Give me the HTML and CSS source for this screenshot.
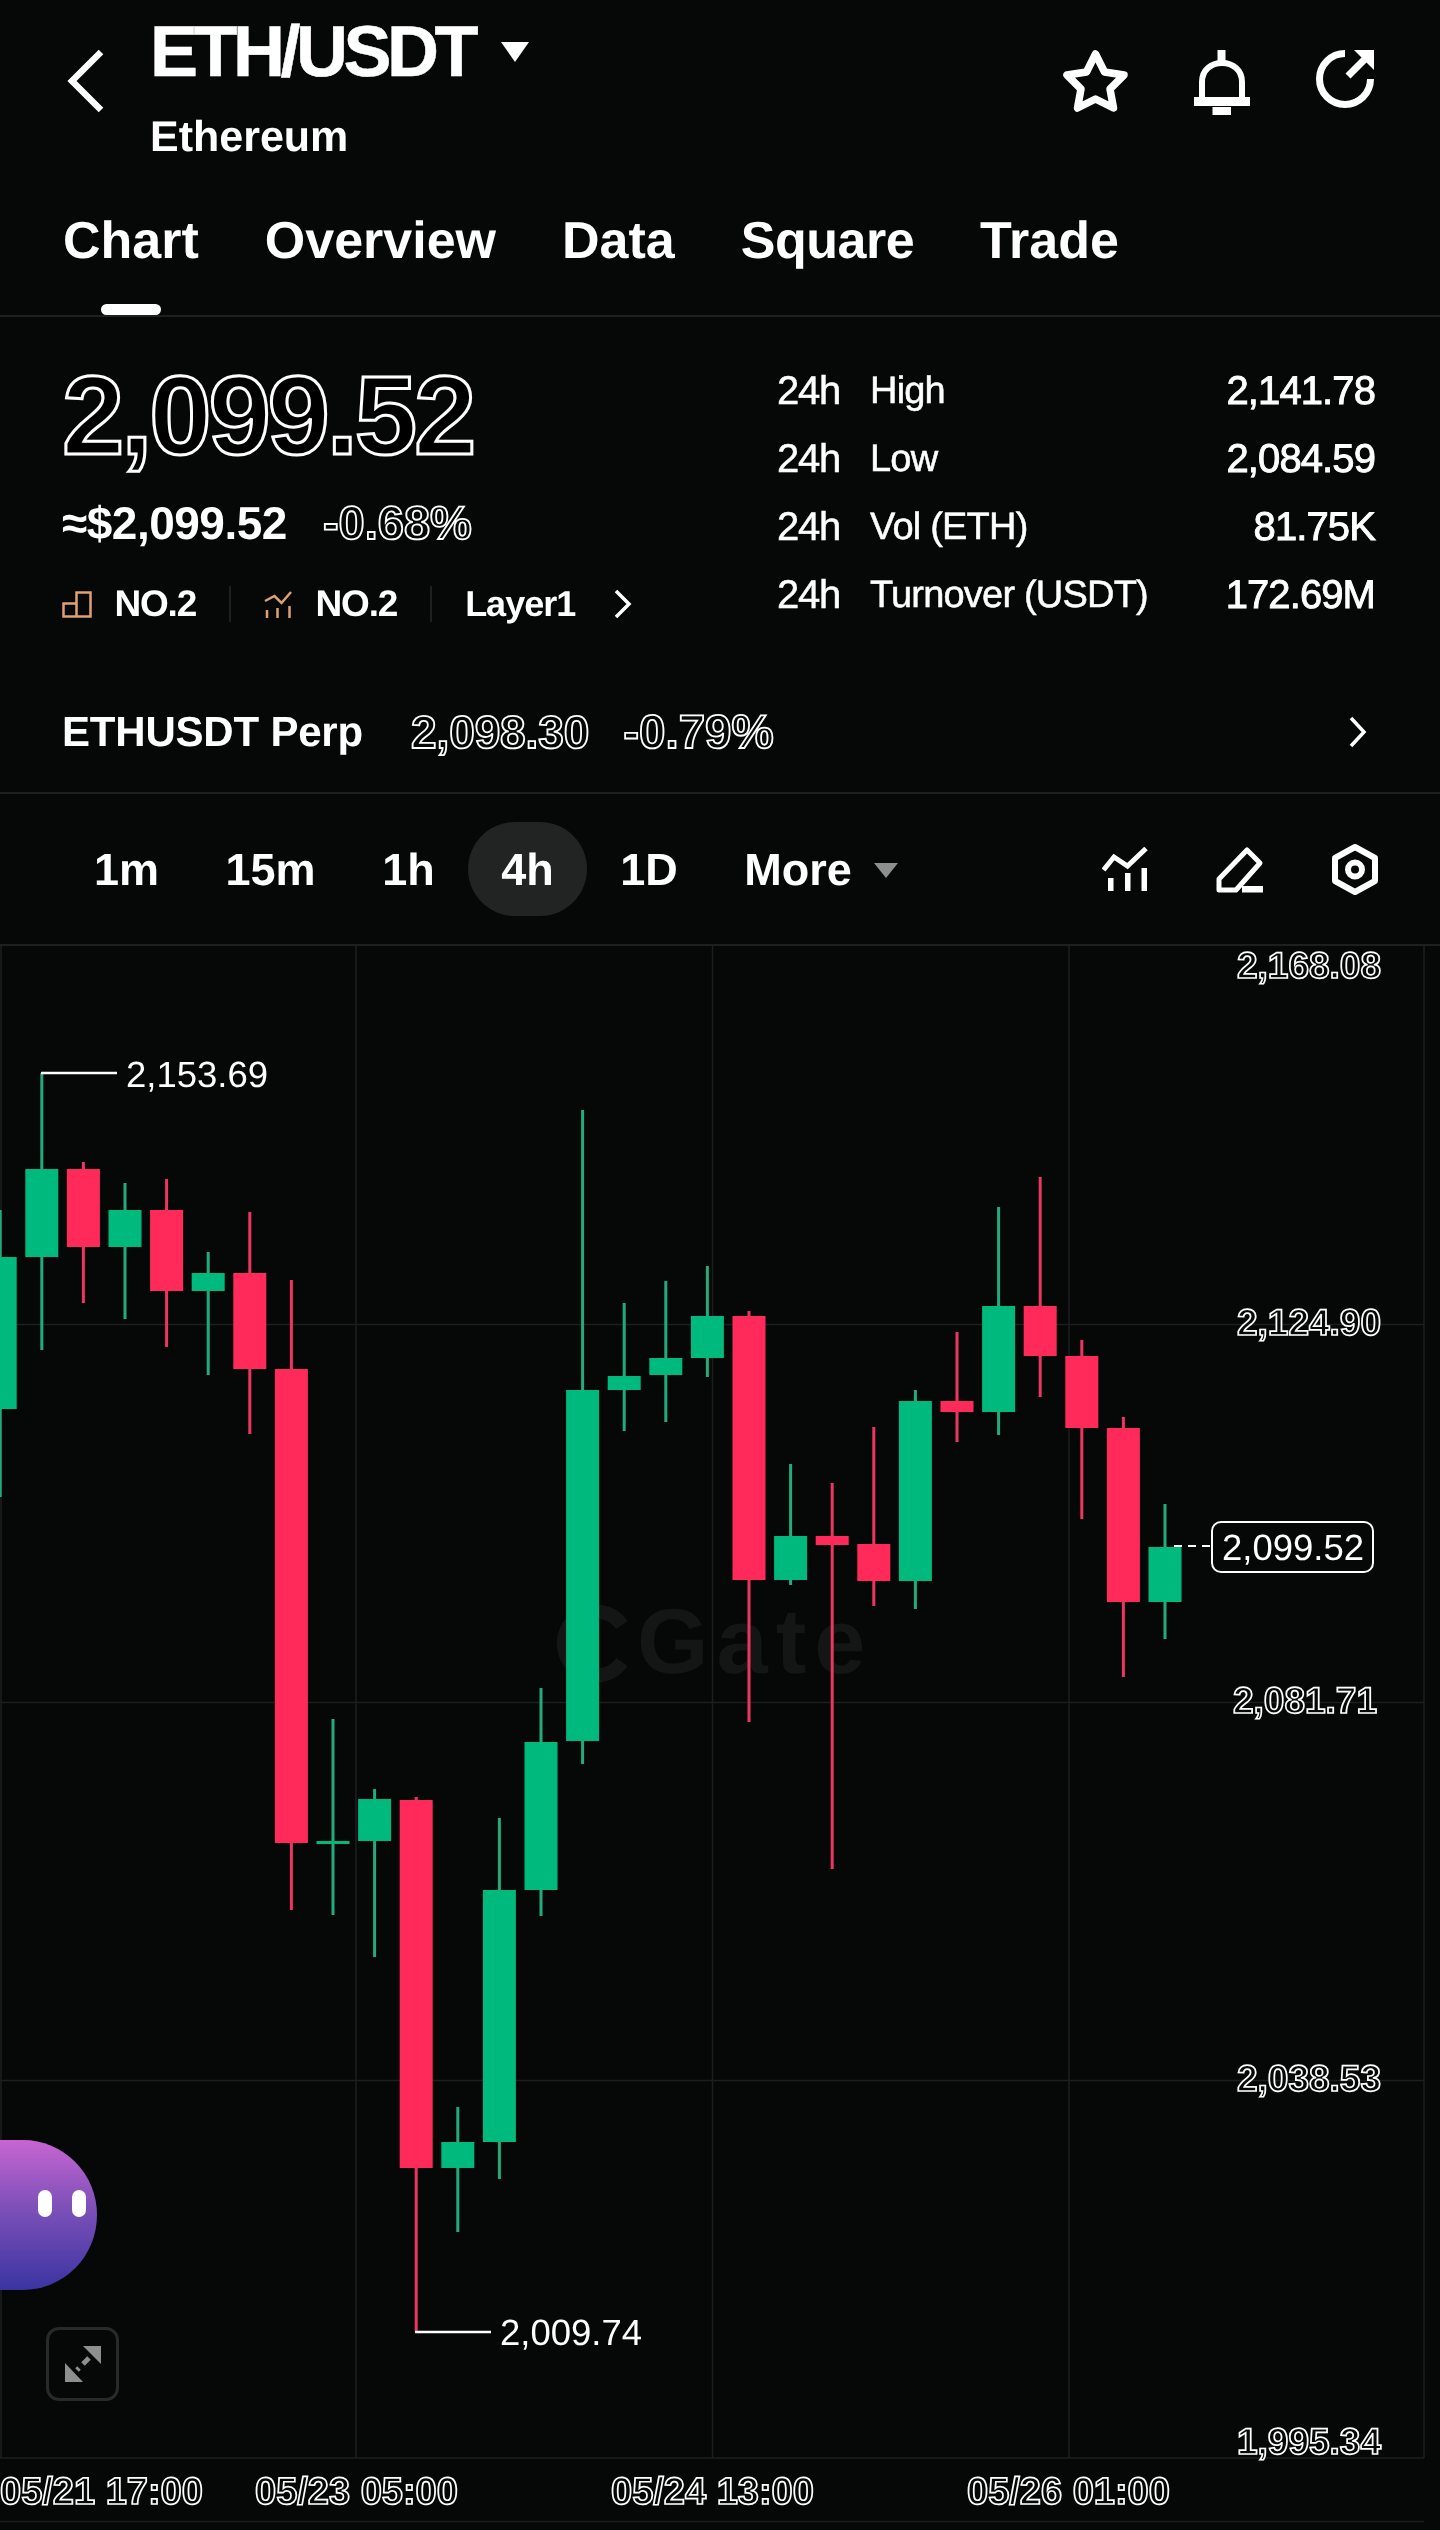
FILE: index.html
```html
<!DOCTYPE html>
<html>
<head>
    <meta charset="utf-8">
    <title>ETH/USDT</title>
    <link rel="stylesheet" href="styles.css">
</head>
<body>
<div class="page">

    <!-- top bar -->
    <header class="head">
        <svg class="back" width="42" height="64" viewBox="0 0 42 64"><path d="M36 3 L7 32 L36 61" class="ico-line" stroke-width="6.500"/></svg>
        <div class="title-col">
            <div class="pair">ETH/USDT <svg class="pair-caret" width="28" height="20" viewBox="0 0 28 20"><path d="M0 0H28L14 20Z" fill="#fff"/></svg></div>
            <div class="coin">Ethereum</div>
        </div>
        <div class="head-icons">
            <svg width="73" height="70" viewBox="0 0 73 70"><path d="M36.5 8 L45.5 26 L65 29 L51 43 L54.5 62 L36.5 53 L18.5 62 L22 43 L8 29 L27.5 26 Z" class="ico-line" stroke-width="7.500" stroke-linejoin="round"/></svg>
            <svg width="66" height="72" viewBox="0 0 66 72"><rect x="28.500" y="4" width="8" height="12" fill="#fff"/><path d="M13 53 V36 C13 24 22 17 33 17 C44 17 53 24 53 36 V53" class="ico-line" stroke-width="6"/><rect x="5" y="51" width="56" height="9" fill="#fff"/><rect x="23.500" y="61" width="18.500" height="8" fill="#fff"/></svg>
            <svg width="66" height="66" viewBox="0 0 66 66"><path d="M33 7.500 A25.500 25.500 0 1 0 58.500 33" class="ico-line" stroke-width="7"/><path d="M36 30 L55 11" class="ico-line" stroke-width="7"/><path d="M42 4 H62 V24 Z" fill="#fff"/></svg>
        </div>
    </header>

    <nav class="tabs">
        <div class="tab">Chart<span class="tab-bar"></span></div>
        <div class="tab">Overview</div>
        <div class="tab">Data</div>
        <div class="tab tab-tight">Square</div>
        <div class="tab">Trade</div>
    </nav>

    <!-- price and 24h figures -->
    <section class="stats">
        <div class="stats-left">
            <div class="price">2,099.52</div>
            <div class="sub-price">
                <span class="usd">≈$2,099.52</span>
                <span class="outline change">-0.68%</span>
            </div>
            <div class="ranks">
                <svg width="30" height="27" viewBox="0 0 30 27"><path d="M1.500 12.500 H14.500 V25.500 H1.500 Z M14.500 25.500 V1.500 H28.500 V25.500 H14.500" fill="none" stroke="#e0a070" stroke-width="2.500"/></svg>
                <span class="rank-text">NO.2</span>
                <span class="rank-div"></span>
                <svg width="28" height="27" viewBox="0 0 28 27"><path d="M1 10 L10.500 5 L17.500 12 L27 1" fill="none" stroke="#e0a070" stroke-width="2.500"/><path d="M3 19V27 M13.500 17V27 M25.500 15V27" fill="none" stroke="#e0a070" stroke-width="2.500"/></svg>
                <span class="rank-text rank-second">NO.2</span>
                <span class="rank-div"></span>
                <span class="rank-tag">Layer1</span>
                <svg class="rank-more" width="18" height="30" viewBox="0 0 18 30"><path d="M2 2 L15 15 L2 28" class="ico-line" stroke-width="3.500"/></svg>
            </div>
        </div>
        <div class="stats-right">
            <div class="stat-row"><span class="stat-24">24h</span><span class="stat-label">High</span><span class="stat-val">2,141.78</span></div>
            <div class="stat-row"><span class="stat-24">24h</span><span class="stat-label">Low</span><span class="stat-val">2,084.59</span></div>
            <div class="stat-row"><span class="stat-24">24h</span><span class="stat-label">Vol (ETH)</span><span class="stat-val">81.75K</span></div>
            <div class="stat-row"><span class="stat-24">24h</span><span class="stat-label">Turnover (USDT)</span><span class="stat-val">172.69M</span></div>
        </div>
    </section>

    <section class="perp">
        <span class="perp-name">ETHUSDT Perp</span>
        <span class="outline perp-price">2,098.30</span>
        <span class="outline perp-change">-0.79%</span>
        <svg class="perp-more" width="18" height="32" viewBox="0 0 18 32"><path d="M2 2 L15 16 L2 30" class="ico-line" stroke-width="3.500"/></svg>
    </section>

    <!-- time intervals and tools -->
    <section class="intervals">
        <div class="int">1m</div>
        <div class="int">15m</div>
        <div class="int">1h</div>
        <div class="int int-active">4h</div>
        <div class="int">1D</div>
        <div class="int int-more">More <svg class="more-caret" width="24" height="15" viewBox="0 0 24 15"><path d="M0 0H24L12 15Z" fill="#8e8e8e"/></svg></div>
        <div class="tools">
            <svg width="46" height="44" viewBox="0 0 46 44"><path d="M1.500 23 L12 10 L25.500 19 L44 1.500" class="ico-line" stroke-width="5"/><path d="M6 31H11.500V44H6Z M23 26H28.500V44H23Z M39.500 21H45V44H39.500Z" fill="#fff"/></svg>
            <svg width="48" height="47" viewBox="0 0 48 47"><path d="M3 44 V33 L31 4 L44 17 L20 44 Z" class="ico-line" stroke-width="5" stroke-linejoin="round"/><rect x="26" y="40" width="21" height="6.500" fill="#fff"/></svg>
            <svg width="46" height="51" viewBox="0 0 46 51"><path d="M23 3 L43 14 V37 L23 48 L3 37 V14 Z" class="ico-line" stroke-width="6" stroke-linejoin="round"/><circle cx="23" cy="25.500" r="7" class="ico-line" stroke-width="6"/></svg>
        </div>
    </section>

    <!-- chart canvas, coordinates in the viewBox are page pixels -->
    <section class="chart">
        <svg class="chart-svg" width="1440" height="1584" viewBox="0 946 1440 1584">
            <g class="grid">
                <path d="M1 946V2458 M356 946V2458 M712.500 946V2458 M1069 946V2458 M1424 946V2458"/>
                <path d="M0 1324.500H1424 M0 1702.500H1424 M0 2080.500H1424 M0 2458H1424 M0 2521.500H1424"/>
            </g>

            <g class="wm">
                <path d="M622 1625 A32 32 0 1 0 622 1662" class="wm-arc"/>
                <text x="637" y="1673" class="wm-text">Gate</text>
            </g>

            <g class="up">
                <path d="M0.200 1210V1497 M41.800 1073V1350 M125 1183V1319 M208.200 1252V1375 M333 1719V1915 M374.600 1789V1957 M457.800 2107V2232 M499.400 1818V2179 M541 1688V1916 M582.600 1110V1764 M624.200 1303V1431 M665.800 1281V1422 M707.400 1266V1377 M790.600 1464V1585 M915.400 1390V1609 M998.600 1207V1435 M1165 1504V1639"/>
                <rect x="-16.300" y="1257" width="33" height="152"/>
                <rect x="25.300" y="1169" width="33" height="88"/>
                <rect x="108.500" y="1210" width="33" height="37"/>
                <rect x="191.700" y="1273" width="33" height="18"/>
                <rect x="316.500" y="1841" width="33" height="3"/>
                <rect x="358.100" y="1799" width="33" height="42"/>
                <rect x="441.300" y="2142" width="33" height="26"/>
                <rect x="482.900" y="1890" width="33" height="252"/>
                <rect x="524.500" y="1742" width="33" height="148"/>
                <rect x="566.100" y="1390" width="33" height="351"/>
                <rect x="607.700" y="1376" width="33" height="14"/>
                <rect x="649.300" y="1358" width="33" height="17"/>
                <rect x="690.900" y="1316" width="33" height="42"/>
                <rect x="774.100" y="1536" width="33" height="44"/>
                <rect x="898.900" y="1401" width="33" height="180"/>
                <rect x="982.100" y="1306" width="33" height="106"/>
                <rect x="1148.500" y="1547" width="33" height="55"/>
            </g>

            <g class="down">
                <path d="M83.400 1162V1303 M166.600 1179V1347 M249.800 1212V1434 M291.400 1280V1910 M416.200 1797V2332 M749 1311V1722 M832.200 1483V1869 M873.800 1427V1606 M957 1332V1442 M1040.200 1177V1397 M1081.800 1340V1519 M1123.400 1417V1677"/>
                <rect x="66.900" y="1169" width="33" height="78"/>
                <rect x="150.100" y="1210" width="33" height="81"/>
                <rect x="233.300" y="1273" width="33" height="96"/>
                <rect x="274.900" y="1369" width="33" height="474"/>
                <rect x="399.700" y="1800" width="33" height="368"/>
                <rect x="732.500" y="1316" width="33" height="264"/>
                <rect x="815.700" y="1536" width="33" height="9"/>
                <rect x="857.300" y="1544" width="33" height="37"/>
                <rect x="940.500" y="1401" width="33" height="11"/>
                <rect x="1023.700" y="1306" width="33" height="50"/>
                <rect x="1065.300" y="1356" width="33" height="72"/>
                <rect x="1106.900" y="1428" width="33" height="174"/>
            </g>

            <!-- high and low markers -->
            <path d="M41 1073H117 M415 2332H491" class="leader"/>
            <text x="126" y="1087" class="mark">2,153.69</text>
            <text x="500" y="2345" class="mark">2,009.74</text>

            <!-- last price -->
            <path d="M1174 1546H1213" class="last-dash"/>
            <rect x="1212" y="1522" width="161" height="50" rx="9" class="last-box"/>
            <text x="1222" y="1560" class="mark">2,099.52</text>

            <text x="1381" y="978" class="axis axis-y">2,168.08</text>
            <text x="1381" y="1335" class="axis axis-y">2,124.90</text>
            <text x="1377" y="1713" class="axis axis-y">2,081.71</text>
            <text x="1381" y="2091" class="axis axis-y">2,038.53</text>
            <text x="1381" y="2454" class="axis axis-y">1,995.34</text>

            <text x="0" y="2504" class="axis axis-x">05/21 17:00</text>
            <text x="255" y="2504" class="axis axis-x">05/23 05:00</text>
            <text x="611" y="2504" class="axis axis-x">05/24 13:00</text>
            <text x="967" y="2504" class="axis axis-x">05/26 01:00</text>
        </svg>

        <div class="bot">
            <span class="bot-eye"></span>
            <span class="bot-eye"></span>
        </div>

        <div class="expand">
            <svg width="36" height="36" viewBox="0 0 36 36"><path d="M18 0H36V18Z M0 36V17L18 36Z" fill="#8e8e8e"/><path d="M24 12 L18 18 M12 24 L14 22" stroke="#8e8e8e" stroke-width="5" fill="none"/></svg>
        </div>
    </section>
</div>
</body>
</html>
```

FILE: styles.css
```css
/* page */
html, body {
    margin: 0;
    padding: 0;
    background-color: #060808;
}
.page {
    width: 1440px;
    height: 2530px;
    overflow: hidden;
    color: #fff;
    font-family: "Liberation Sans", Arial, sans-serif;
    text-rendering: geometricPrecision;
    will-change: transform;
}
.ico-line {
    fill: none;
    stroke: #fff;
}
.outline {
    color: #060808;
    -webkit-text-stroke: 1.8px #fff;
    font-weight: 700;
}

/* top bar */
.head {
    display: flex;
    align-items: flex-start;
    height: 162px;
    padding-left: 65px;
}
.back {
    margin-top: 49px;
}
.title-col {
    margin-left: 43px;
    padding-top: 16px;
}
.pair {
    display: flex;
    align-items: flex-start;
    font-size: 72px;
    line-height: 72px;
    font-weight: 700;
    letter-spacing: -4.5px;
    white-space: pre;
    -webkit-text-stroke: 0.5px #fff;
}
.pair-caret {
    margin: 26px 0 0 11px;
}
.coin {
    margin-top: 25px;
    font-size: 43px;
    line-height: 48px;
    font-weight: 700;
}
.head-icons {
    display: flex;
    align-items: flex-start;
    gap: 57px;
    margin-left: auto;
    padding: 46px 62px 0 0;
}

/* tabs */
.tabs {
    display: flex;
    gap: 66px;
    height: 155px;
    box-sizing: border-box;
    padding: 49px 0 0 63px;
    border-bottom: 2px solid #1e2020;
    font-size: 52px;
    line-height: 60px;
    font-weight: 700;
}
.tab {
    display: flex;
    flex-direction: column;
    align-items: center;
}
.tab-tight {
    letter-spacing: -0.5px;
}
.tab-bar {
    width: 60px;
    height: 11px;
    margin-top: 33px;
    border-radius: 6px;
    background-color: #fff;
}

/* price block */
.stats {
    display: flex;
    height: 355px;
    box-sizing: border-box;
    padding: 39px 63px 0 62px;
}
.stats-left {
    flex: 1;
}
.price {
    font-size: 112px;
    line-height: 120px;
    font-weight: 700;
    letter-spacing: -3.1px;
    color: #000;
    -webkit-text-stroke: 3px #fff;
}
.sub-price {
    display: flex;
    margin-top: 21px;
    line-height: 52px;
}
.usd {
    font-size: 46px;
    font-weight: 700;
    letter-spacing: -0.5px;
}
.change {
    margin-left: 36px;
    font-size: 47px;
}
.ranks {
    display: flex;
    align-items: center;
    height: 44px;
    margin-top: 33px;
}
.rank-text {
    margin-left: 22.500px;
    font-size: 37px;
    font-weight: 700;
    letter-spacing: -1.2px;
}
.rank-second {
    margin-left: 23.500px;
}
.rank-div {
    width: 2px;
    height: 36px;
    margin: 0 33px;
    background-color: #1e2020;
}
.rank-tag {
    font-size: 36px;
    font-weight: 700;
    letter-spacing: -1px;
}
.rank-more {
    margin-left: 39px;
}
.stats-right {
    width: 600px;
    margin-top: 1px;
}
.stat-row {
    display: flex;
    height: 68px;
    align-items: center;
    font-size: 38px;
    letter-spacing: -0.8px;
    -webkit-text-stroke: 0.5px #fff;
}
.stat-24 {
    width: 93px;
    font-size: 40px;
    letter-spacing: -1.3px;
}
.stat-val {
    margin-left: auto;
    padding-right: 2px;
    font-size: 40px;
    letter-spacing: -0.9px;
    -webkit-text-stroke: 0.9px #fff;
}

/* perp row */
.perp {
    display: flex;
    align-items: center;
    height: 122px;
    box-sizing: border-box;
    padding: 0 73px 0 62px;
    border-bottom: 2px solid #1e2020;
}
.perp-name {
    font-size: 42px;
    font-weight: 700;
    letter-spacing: -0.2px;
}
.perp-price {
    margin-left: 48px;
    font-size: 46px;
    letter-spacing: -0.1px;
}
.perp-change {
    margin-left: 34px;
    font-size: 47.500px;
}
.perp-more {
    margin-left: auto;
}

/* interval row */
.intervals {
    display: flex;
    align-items: center;
    gap: 0.500px;
    height: 152px;
    box-sizing: border-box;
    padding: 0 62px 0 61px;
    border-bottom: 2px solid #1e2020;
    font-size: 45px;
    font-weight: 700;
}
.int {
    padding: 2px 33px 0;
    line-height: 92px;
}
.int-active {
    border-radius: 47px;
    background-color: #222424;
}
.int-more {
    display: flex;
    align-items: center;
    white-space: pre;
}
.more-caret {
    margin-left: 10px;
}
.tools {
    display: flex;
    align-items: center;
    gap: 68px;
    margin-left: auto;
}

/* chart */
.chart {
    position: relative;
}
.chart-svg {
    display: block;
}
.grid path {
    fill: none;
    stroke: #1d1f1f;
    stroke-width: 1.5;
}
.wm-arc {
    fill: none;
    stroke: #141616;
    stroke-width: 14;
}
.wm-text {
    font-size: 92px;
    font-weight: 700;
    letter-spacing: 8px;
    fill: #141616;
}
.up rect {
    fill: #00b97c;
}
.up path {
    stroke: #22ab7c;
    stroke-width: 3;
}
.down rect {
    fill: #ff2a5a;
}
.down path {
    stroke: #ec3660;
    stroke-width: 3;
}
.leader {
    fill: none;
    stroke: #fff;
    stroke-width: 2.5;
}
.mark {
    font-size: 36.500px;
    fill: #fff;
}
.last-dash {
    stroke: #fff;
    stroke-width: 2;
    stroke-dasharray: 8 6;
}
.last-box {
    fill: #060808;
    stroke: #fff;
    stroke-width: 2;
}
.axis {
    font-size: 37px;
    font-weight: 700;
    fill: #060808;
    stroke: #fff;
    stroke-width: 1.7;
}
.axis-x {
    font-size: 38px;
}
.axis-y {
    text-anchor: end;
}

/* floating helper bubble */
.bot {
    position: absolute;
    left: 0;
    top: 1194px;
    display: flex;
    align-items: flex-start;
    gap: 20px;
    width: 97px;
    height: 150px;
    box-sizing: border-box;
    padding: 50px 0 0 38px;
    border-radius: 0 74px 74px 0 / 0 75px 75px 0;
    background: linear-gradient(180deg, #c765d2 0%, #7d50b8 45%, #3a34a2 100%);
}
.bot-eye {
    width: 14px;
    height: 27px;
    border-radius: 7px;
    background-color: #fff;
}
.expand {
    position: absolute;
    left: 46px;
    top: 1381px;
    display: flex;
    align-items: center;
    justify-content: center;
    width: 73px;
    height: 74px;
    box-sizing: border-box;
    border: 3px solid #282a2a;
    border-radius: 13px;
}
```
